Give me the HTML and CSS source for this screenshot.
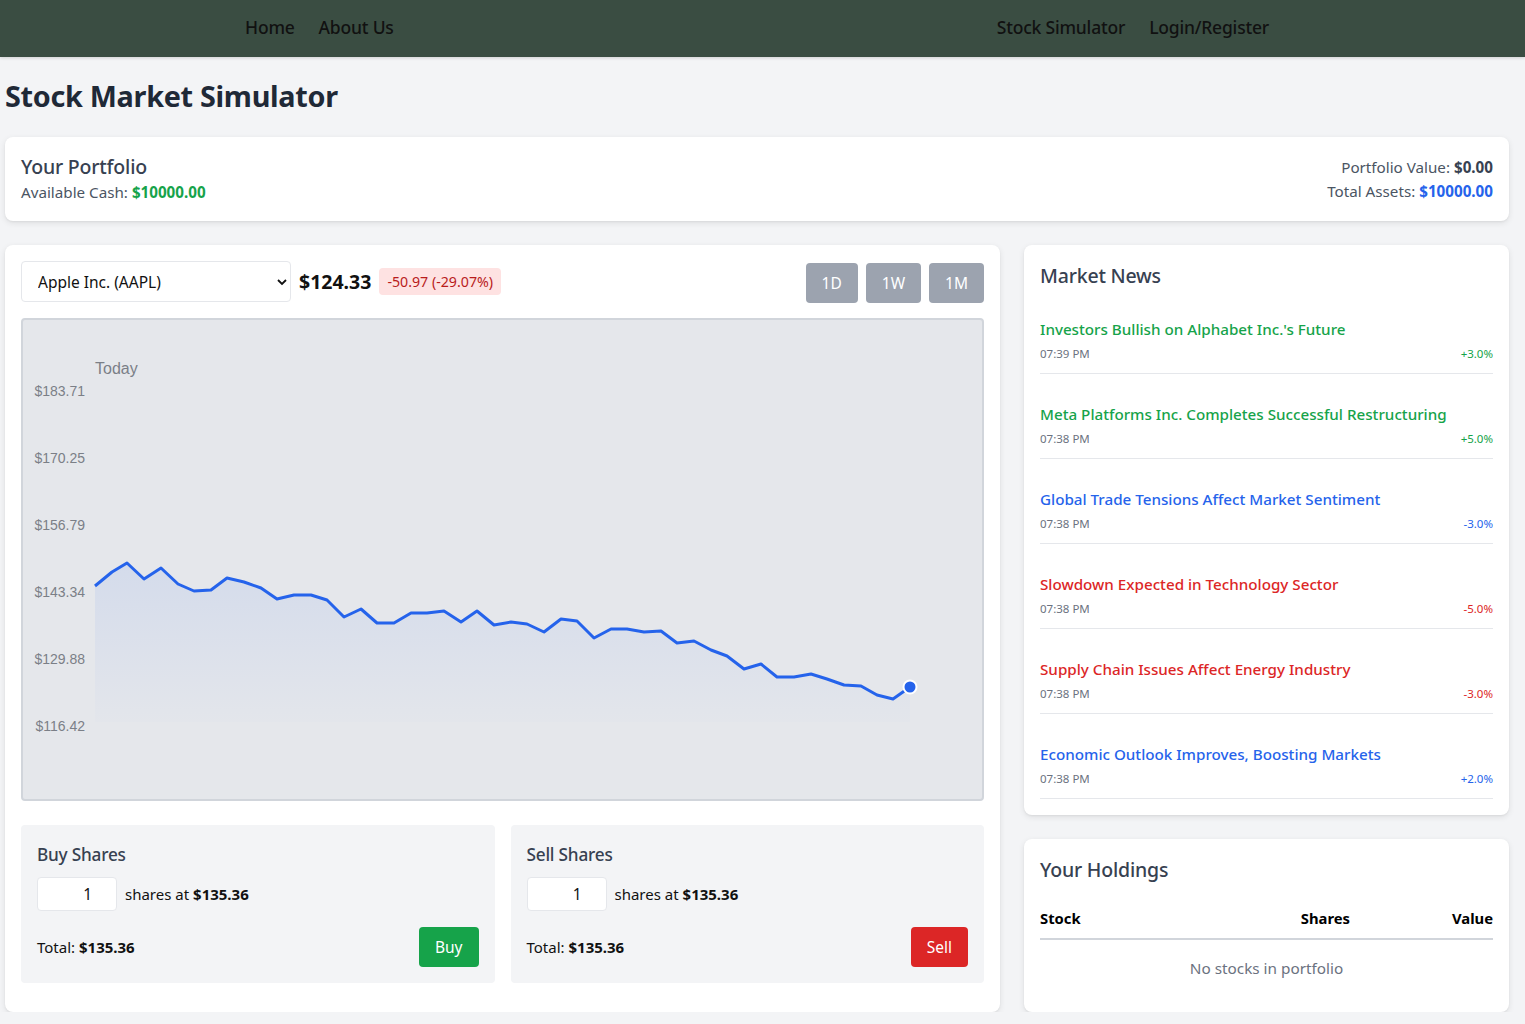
FILE: index.html
```html
<!DOCTYPE html>
<html lang="en">
<head>
<meta charset="utf-8">
<title>Stock Market Simulator</title>
<link rel="stylesheet" href="styles.css">
</head>
<body>
<header class="topbar">
  <nav class="nav-group">
    <a class="nav-link" href="#">Home</a>
    <a class="nav-link" href="#">About Us</a>
  </nav>
  <nav class="nav-group">
    <a class="nav-link" href="#">Stock Simulator</a>
    <a class="nav-link" href="#">Login/Register</a>
  </nav>
</header>

<main class="page">
  <h1 class="page-title">Stock Market Simulator</h1>

  <section class="card portfolio">
    <div>
      <h2 class="card-title">Your Portfolio</h2>
      <p class="muted-line">Available Cash: <strong class="green">$10000.00</strong></p>
    </div>
    <div class="portfolio-right">
      <p class="muted-line">Portfolio Value: <strong class="dark">$0.00</strong></p>
      <p class="muted-line">Total Assets: <strong class="blue">$10000.00</strong></p>
    </div>
  </section>

  <div class="layout">
    <section class="card trade-card">
      <div class="controls">
        <div class="stock-picker">
          <div class="select-wrap">
            <select class="stock-select">
              <option>Apple Inc. (AAPL)</option>
            </select>
            <svg class="chevron" width="10" height="8" viewBox="0 0 10 8"><path d="M1 2l4 4 4-4" fill="none" stroke="#111" stroke-width="1.8"/></svg>
          </div>
          <span class="price">$124.33</span>
          <span class="change-badge">-50.97 (-29.07%)</span>
        </div>
        <div class="ranges">
          <button class="range-btn">1D</button>
          <button class="range-btn">1W</button>
          <button class="range-btn">1M</button>
        </div>
      </div>

      <div class="chart-box">
        <svg class="chart" viewBox="23 320 959 479" preserveAspectRatio="none">
          <defs>
            <linearGradient id="fillGrad" x1="0" y1="560" x2="0" y2="722" gradientUnits="userSpaceOnUse">
              <stop offset="0" stop-color="#2563eb" stop-opacity="0.09"/>
              <stop offset="1" stop-color="#2563eb" stop-opacity="0.01"/>
            </linearGradient>
          </defs>
          <text class="chart-title" x="95" y="374">Today</text>
          <g class="axis">
            <text x="85" y="396" text-anchor="end">$183.71</text>
            <text x="85" y="463" text-anchor="end">$170.25</text>
            <text x="85" y="530" text-anchor="end">$156.79</text>
            <text x="85" y="597" text-anchor="end">$143.34</text>
            <text x="85" y="664" text-anchor="end">$129.88</text>
            <text x="85" y="731" text-anchor="end">$116.42</text>
          </g>
          <polygon fill="url(#fillGrad)" points="95,586 112,572 127,563 144,579 161,568 178,584 194,591 211,590 227,578 244,582 261,588 277,599 294,595 311,595 327,600 344,617 361,609 377,623 394,623 411,613 427,613 444,611 461,622 477,611 494,625 511,622 527,624 544,632 561,619 577,621 594,638 611,629 627,629 644,632 661,631 677,643 694,641 711,650 727,656 744,669 761,664 777,677 794,677 811,674 827,679 844,685 861,686 877,695 893,699 910,687 910,722 95,722"/>
          <polyline fill="none" stroke="#2563eb" stroke-width="3" stroke-linejoin="round" points="95,586 112,572 127,563 144,579 161,568 178,584 194,591 211,590 227,578 244,582 261,588 277,599 294,595 311,595 327,600 344,617 361,609 377,623 394,623 411,613 427,613 444,611 461,622 477,611 494,625 511,622 527,624 544,632 561,619 577,621 594,638 611,629 627,629 644,632 661,631 677,643 694,641 711,650 727,656 744,669 761,664 777,677 794,677 811,674 827,679 844,685 861,686 877,695 893,699 910,687"/>
          <circle cx="910" cy="687" r="6.5" fill="#2563eb" stroke="#fff" stroke-width="2"/>
        </svg>
      </div>

      <div class="trade-panels">
        <div class="panel">
          <h3 class="panel-title">Buy Shares</h3>
          <div class="qty-row">
            <input class="qty" type="text" value="1">
            <span>shares at <strong>$135.36</strong></span>
          </div>
          <div class="total-row">
            <span>Total: <strong>$135.36</strong></span>
            <button class="action-btn buy">Buy</button>
          </div>
        </div>
        <div class="panel">
          <h3 class="panel-title">Sell Shares</h3>
          <div class="qty-row">
            <input class="qty" type="text" value="1">
            <span>shares at <strong>$135.36</strong></span>
          </div>
          <div class="total-row">
            <span>Total: <strong>$135.36</strong></span>
            <button class="action-btn sell">Sell</button>
          </div>
        </div>
      </div>
    </section>

    <aside class="side">
      <section class="card news">
        <h2 class="card-title section-head">Market News</h2>
        <ul class="news-list">
          <li class="news-item">
            <p class="news-title green">Investors Bullish on Alphabet Inc.'s Future</p>
            <div class="news-meta"><span>07:39 PM</span><span class="green">+3.0%</span></div>
          </li>
          <li class="news-item">
            <p class="news-title green">Meta Platforms Inc. Completes Successful Restructuring</p>
            <div class="news-meta"><span>07:38 PM</span><span class="green">+5.0%</span></div>
          </li>
          <li class="news-item">
            <p class="news-title blue">Global Trade Tensions Affect Market Sentiment</p>
            <div class="news-meta"><span>07:38 PM</span><span class="blue">-3.0%</span></div>
          </li>
          <li class="news-item">
            <p class="news-title red">Slowdown Expected in Technology Sector</p>
            <div class="news-meta"><span>07:38 PM</span><span class="red">-5.0%</span></div>
          </li>
          <li class="news-item">
            <p class="news-title red">Supply Chain Issues Affect Energy Industry</p>
            <div class="news-meta"><span>07:38 PM</span><span class="red">-3.0%</span></div>
          </li>
          <li class="news-item">
            <p class="news-title blue">Economic Outlook Improves, Boosting Markets</p>
            <div class="news-meta"><span>07:38 PM</span><span class="blue">+2.0%</span></div>
          </li>
        </ul>
      </section>

      <section class="card holdings">
        <h2 class="card-title section-head holdings-head">Your Holdings</h2>
        <table class="holdings-table">
          <thead>
            <tr><th class="col-stock">Stock</th><th class="col-shares">Shares</th><th class="col-value">Value</th></tr>
          </thead>
          <tbody>
            <tr><td class="empty" colspan="3">No stocks in portfolio</td></tr>
          </tbody>
        </table>
      </section>
    </aside>
  </div>
</main>
</body>
</html>
```

FILE: styles.css
```css
* { box-sizing: border-box; }

body {
  margin: 0;
  background: #f3f4f6;
  font-family: "Noto Sans", "Open Sans", sans-serif;
  color: #111827;
}

p, h1, h2, h3, ul { margin: 0; padding: 0; }

.topbar {
  height: 57px;
  background: #3a4d42;
  display: flex;
  align-items: center;
  justify-content: space-between;
  padding: 0 256px 4px 245px;
  box-shadow: 0 1px 3px rgba(0,0,0,0.15);
}

.nav-group { display: flex; gap: 24px; }

.nav-link {
  color: #111;
  text-decoration: none;
  font-size: 17.5px;
  font-weight: 500;
  letter-spacing: -0.2px;
}

.page { padding: 0 16px 0 5px; }

.page-title {
  margin: 0;
  padding: 19px 0 21px;
  font-size: 28.8px;
  font-weight: 700;
  color: #1f2937;
  line-height: 40px;
  letter-spacing: -0.3px;
}

.card {
  background: #fff;
  border-radius: 8px;
  box-shadow: 0 2px 6px rgba(0,0,0,0.09), 0 1px 2px rgba(0,0,0,0.05);
  padding: 16px;
}

.portfolio {
  display: flex;
  justify-content: space-between;
  align-items: center;
  height: 84px;
}

.card-title {
  font-size: 19.5px;
  font-weight: 500;
  color: #374151;
  line-height: 28px;
  letter-spacing: -0.2px;
}

.muted-line {
  font-size: 15.2px;
  color: #4b5563;
  line-height: 24px;
}

.portfolio .card-title { line-height: 26px; }

.portfolio-right { text-align: right; }

.green { color: #16a34a; }
.blue { color: #2563eb; }
.red { color: #dc2626; }
.dark { color: #374151; }

.layout {
  margin-top: 24px;
  display: grid;
  grid-template-columns: 995px 485px;
  gap: 24px;
}

.controls {
  display: flex;
  justify-content: space-between;
  align-items: center;
  height: 41px;
}

.stock-picker { display: flex; align-items: center; gap: 8px; }

.select-wrap { position: relative; }

.stock-select {
  appearance: none;
  -webkit-appearance: none;
  width: 270px;
  height: 41px;
  border: 1px solid #e5e7eb;
  border-radius: 4px;
  background: #fff;
  padding: 0 16px;
  font-family: inherit;
  font-size: 15.5px;
  color: #111;
}

.chevron {
  position: absolute;
  right: 4px;
  top: 17px;
  pointer-events: none;
}

.price {
  font-size: 19.5px;
  font-weight: 700;
  color: #111;
}

.change-badge {
  background: #fee2e2;
  color: #b91c1c;
  font-size: 14.2px;
  padding: 3px 8px;
  border-radius: 4px;
  line-height: 21px;
}

.ranges { display: flex; gap: 8px; }

.range-btn {
  height: 40px;
  border: none;
  border-radius: 4px;
  background: #9ca3af;
  color: #fff;
  font-family: inherit;
  font-size: 15.5px;
  padding: 0 16px;
  margin-top: 2px;
}

.chart-box {
  margin-top: 16px;
  height: 483px;
  background: #e5e7eb;
  border: 2px solid #d1d5db;
  border-radius: 4px;
  overflow: hidden;
}

.chart { display: block; width: 100%; height: 100%; }

.chart-title {
  font-family: "Liberation Sans", Arial, sans-serif;
  font-size: 16px;
  fill: #7b7f87;
}

.axis text {
  font-family: "Liberation Sans", Arial, sans-serif;
  font-size: 14px;
  fill: #7b7f87;
}

.trade-panels {
  margin-top: 24px;
  display: grid;
  grid-template-columns: 1fr 1fr;
  gap: 16px;
}

.panel {
  background: #f3f4f6;
  border-radius: 4px;
  padding: 16px;
  height: 158px;
}

.panel-title {
  font-size: 17.2px;
  font-weight: 500;
  color: #374151;
  line-height: 28px;
  letter-spacing: -0.2px;
}

.qty-row {
  margin-top: 8px;
  display: flex;
  align-items: center;
  gap: 8px;
  font-size: 15px;
  color: #111;
}

.qty {
  width: 80px;
  height: 34px;
  border: 1px solid #e5e7eb;
  border-radius: 4px;
  background: #fff;
  font-family: inherit;
  font-size: 15.5px;
  text-align: right;
  padding: 0 24px 0 8px;
  color: #111;
}

.total-row {
  margin-top: 16px;
  display: flex;
  justify-content: space-between;
  align-items: center;
  font-size: 15px;
  color: #111;
}

.action-btn {
  height: 40px;
  border: none;
  border-radius: 4px;
  color: #fff;
  font-family: inherit;
  font-size: 15.5px;
  padding: 0 16px;
}

.buy { background: #16a34a; }
.sell { background: #dc2626; }

.side { display: flex; flex-direction: column; gap: 24px; }

.section-head { margin-bottom: 16px; margin-top: 1px; }

.holdings-head { margin-bottom: 14px; }

.news-list { list-style: none; display: flex; flex-direction: column; gap: 16px; }

.news-item {
  padding: 12px 0 11px;
  border-bottom: 1px solid #e5e7eb;
}

.news-item + .news-item { padding-top: 13px; }

.news-title {
  font-size: 15.2px;
  font-weight: 500;
  line-height: 22px;
}

.news-meta {
  margin-top: 6px;
  display: flex;
  justify-content: space-between;
  font-size: 11.5px;
  line-height: 16px;
  color: #6b7280;
}

.holdings-table {
  width: 100%;
  border-collapse: collapse;
}

.holdings-table th {
  font-size: 14.8px;
  font-weight: 700;
  color: #000;
  padding: 8px 0;
  line-height: 24px;
  border-bottom: 2px solid #d1d5db;
}

.col-stock { text-align: left; }
.col-shares { text-align: right; width: 150px; }
.col-value { text-align: right; width: 143px; }

.empty {
  text-align: center;
  color: #6b7280;
  font-size: 15.3px;
  line-height: 24px;
  padding: 16px 0;
}
```
